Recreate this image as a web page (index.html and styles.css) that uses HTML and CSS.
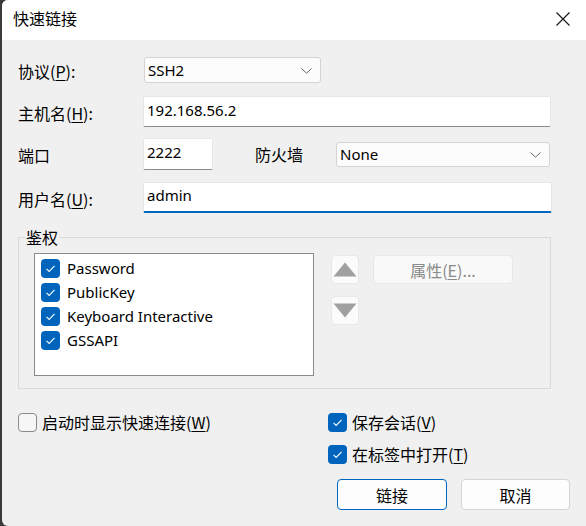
FILE: index.html
```html
<!DOCTYPE html>
<html lang="zh">
<head>
<meta charset="utf-8">
<title>快速链接</title>
<link rel="stylesheet" href="styles.css">
</head>
<body>
<div class="window">
  <div class="titlebar">
    <span class="title">快速链接</span>
    <svg class="close" width="14" height="14" viewBox="0 0 14 14"><path d="M0.5 0.5L13.5 13.5M13.5 0.5L0.5 13.5" stroke="#1a1a1a" stroke-width="1.2" fill="none"/></svg>
  </div>
  <div class="content">
    <div class="row row1">
      <span class="lbl">协议(<u>P</u>):</span>
      <div class="select sel-protocol"><span class="val">SSH2</span><svg class="chev" width="11" height="6" viewBox="0 0 11 6"><path d="M0.5 0.5L5.5 5.2L10.5 0.5" stroke="#666" stroke-width="1" fill="none"/></svg></div>
    </div>
    <div class="row row2">
      <span class="lbl">主机名(<u>H</u>):</span>
      <div class="input inp-host"><span class="val">192.168.56.2</span></div>
    </div>
    <div class="row row3">
      <span class="lbl">端口</span>
      <div class="input inp-port"><span class="val">2222</span></div>
      <span class="lbl-fw">防火墙</span>
      <div class="select sel-fw"><span class="val">None</span><svg class="chev" width="11" height="6" viewBox="0 0 11 6"><path d="M0.5 0.5L5.5 5.2L10.5 0.5" stroke="#666" stroke-width="1" fill="none"/></svg></div>
    </div>
    <div class="row row4">
      <span class="lbl">用户名(<u>U</u>):</span>
      <div class="input inp-user focused"><span class="val">admin</span></div>
    </div>

    <fieldset class="group">
      <legend>鉴权</legend>
      <div class="group-body">
        <div class="listbox">
          <div class="item"><span class="cb on"><svg width="19" height="19" viewBox="0 0 19 19"><path d="M5.5 9.8L8.2 12.4L13.6 6.8" stroke="#fff" stroke-width="1.1" fill="none"/></svg></span><span class="val">Password</span></div>
          <div class="item"><span class="cb on"><svg width="19" height="19" viewBox="0 0 19 19"><path d="M5.5 9.8L8.2 12.4L13.6 6.8" stroke="#fff" stroke-width="1.1" fill="none"/></svg></span><span class="val">PublicKey</span></div>
          <div class="item"><span class="cb on"><svg width="19" height="19" viewBox="0 0 19 19"><path d="M5.5 9.8L8.2 12.4L13.6 6.8" stroke="#fff" stroke-width="1.1" fill="none"/></svg></span><span class="val">Keyboard Interactive</span></div>
          <div class="item"><span class="cb on"><svg width="19" height="19" viewBox="0 0 19 19"><path d="M5.5 9.8L8.2 12.4L13.6 6.8" stroke="#fff" stroke-width="1.1" fill="none"/></svg></span><span class="val">GSSAPI</span></div>
        </div>
        <div class="arrows">
          <div class="abtn"><svg width="24" height="15" viewBox="0 0 24 15"><path d="M12 0.5L23.5 14.5H0.5Z" fill="#a0a0a0"/></svg></div>
          <div class="abtn"><svg width="24" height="15" viewBox="0 0 24 15"><path d="M0.5 0.5H23.5L12 14.5Z" fill="#a0a0a0"/></svg></div>
        </div>
        <div class="propbtn">属性(<u>E</u>)...</div>
      </div>
    </fieldset>

    <div class="bottom">
      <div class="left-col">
        <div class="check"><span class="cb off"></span><span>启动时显示快速连接(<u>W</u>)</span></div>
      </div>
      <div class="right-col">
        <div class="check"><span class="cb on"><svg width="19" height="19" viewBox="0 0 19 19"><path d="M5.5 9.8L8.2 12.4L13.6 6.8" stroke="#fff" stroke-width="1.1" fill="none"/></svg></span><span>保存会话(<u>V</u>)</span></div>
        <div class="check"><span class="cb on"><svg width="19" height="19" viewBox="0 0 19 19"><path d="M5.5 9.8L8.2 12.4L13.6 6.8" stroke="#fff" stroke-width="1.1" fill="none"/></svg></span><span>在标签中打开(<u>T</u>)</span></div>
        <div class="buttons">
          <div class="btn primary">链接</div>
          <div class="btn">取消</div>
        </div>
      </div>
    </div>
  </div>
</div>
</body>
</html>
```
FILE: styles.css
```css
* { box-sizing: border-box; }
html, body { margin: 0; padding: 0; }
body {
  background: #3a3a3a;
  width: 586px;
  height: 526px;
  overflow: hidden;
  font-family: "Noto Sans", "Noto Sans CJK SC", sans-serif;
  font-size: 16px;
  color: #000;
}
.window {
  margin-left: 2px;
  width: 584px;
  height: 526px;
  background: #f0f0f0;
  border-radius: 6px 0 0 6px;
  overflow: hidden;
  position: relative;
}
.titlebar {
  height: 40px;
  background: #fff;
  display: flex;
  align-items: center;
  justify-content: space-between;
  padding: 0 16px 4px 11px;
}
.title {
  font-family: "Noto Sans CJK SC", sans-serif;
  font-size: 16px;
  line-height: 20px;
}
.close { display: block; margin-top: 1px; }
.content {
  padding: 0 0 0 16px;
}
.val {
  font-family: "Noto Sans", "Noto Sans CJK SC", sans-serif;
  font-size: 15px;
  line-height: 20px;
}
.lbl, .lbl-fw, .check, .propbtn, .btn, legend {
  font-family: "Noto Sans CJK SC", sans-serif;
  font-size: 16px;
  line-height: 20px;
}
u { text-decoration-thickness: 1px; text-underline-offset: 2px; }
.row {
  display: flex;
  align-items: center;
}
.lbl { flex: 0 0 125px; padding-top: 2px; }
.row1 { margin-top: 17px; height: 26px; }
.row2 { margin-top: 13px; height: 31px; }
.row3 { margin-top: 11px; height: 32px; }
.row4 { margin-top: 12px; height: 31px; }

.select {
  display: flex;
  align-items: center;
  justify-content: space-between;
  background: #fcfcfc;
  border: 1px solid #d3d3d3;
  border-radius: 3px;
  padding: 0 8px 0 3px;
}
.select .chev { display: block; margin-top: 1px; }
.sel-protocol { width: 177px; height: 26px; margin-left: 1px; }
.sel-fw { width: 214px; height: 25px; }

.input {
  display: flex;
  align-items: center;
  background: #fff;
  border: 1px solid #e6e6e6;
  border-bottom-color: #8a8a8a;
  border-radius: 2px;
  padding: 0 3px 4px;
}
.inp-host { width: 408px; height: 31px; }
.inp-port { width: 70px; height: 32px; }
.inp-user { width: 409px; height: 31px; }
.input.focused { border-bottom: 2px solid #0067c0; }

.lbl-fw { margin-left: 42px; width: 81px; }

.group {
  margin: 16px 0 0 0;
  width: 533px;
  border: 1px solid #dadada;
  padding: 0;
  min-width: 0;
}
.group legend {
  padding: 0 1px;
  margin-left: 6px;
  line-height: 16px;
}
.group-body {
  display: flex;
  align-items: flex-start;
  padding: 8px 0 12px 15px;
}
.listbox {
  width: 280px;
  height: 123px;
  background: #fff;
  border: 1px solid #8a8a8a;
  padding: 2px 6px;
}
.item {
  display: flex;
  align-items: center;
  height: 24px;
  gap: 7px;
}
.cb {
  flex: 0 0 19px;
  width: 19px;
  height: 19px;
  border-radius: 4px;
  display: block;
}
.cb svg { display: block; }
.cb.on { background: #0063bc; }
.cb.off { background: #f6f6f6; border: 1px solid #8a8a8a; }

.arrows {
  margin-left: 17px;
  margin-top: 2px;
  display: flex;
  flex-direction: column;
  gap: 12px;
}
.abtn {
  width: 28px;
  height: 29px;
  background: #fbfbfb;
  border: 1px solid #e8e8e8;
  border-radius: 4px;
  display: flex;
  align-items: center;
  justify-content: center;
}
.abtn svg { display: block; }
.propbtn {
  margin-left: 14px;
  margin-top: 2px;
  width: 140px;
  height: 29px;
  background: #f9f9f9;
  border: 1px solid #e8e8e8;
  border-radius: 4px;
  color: #8a8a8a;
  display: flex;
  align-items: center;
  justify-content: center;
}

.bottom {
  display: flex;
  margin-top: 23px;
}
.left-col { width: 310px; }
.right-col {
  display: flex;
  flex-direction: column;
  gap: 12px;
}
.check {
  display: flex;
  align-items: center;
  gap: 5px;
  height: 20px;
}
.buttons {
  display: flex;
  gap: 14px;
  margin: 3px 0 0 9px;
}
.btn {
  width: 110px;
  height: 31px;
  background: #fdfdfd;
  border: 1px solid #d5d5d5;
  border-radius: 4px;
  display: flex;
  align-items: center;
  justify-content: center;
}
.btn + .btn { width: 109px; }
.btn.primary { border-color: #0067c0; }
```
